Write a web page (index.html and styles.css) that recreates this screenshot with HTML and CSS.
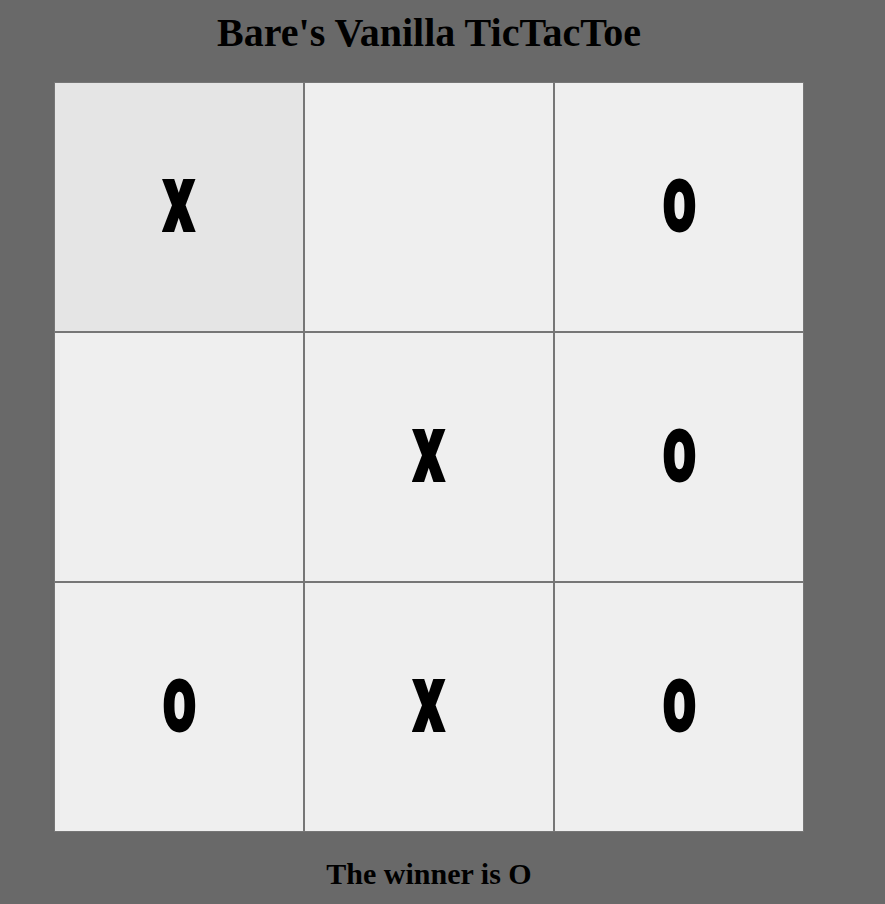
FILE: index.html
```html
<!DOCTYPE html>
<html lang="en">
<head>
<meta charset="utf-8">
<title>Bare's Vanilla TicTacToe</title>
<link rel="stylesheet" href="styles.css">
</head>
<body>
<main class="game">
  <h1 class="title">Bare's Vanilla TicTacToe</h1>
  <div class="board">
    <button class="cell cell-hover"><span class="mark">X</span></button>
    <button class="cell"><span class="mark"></span></button>
    <button class="cell"><span class="mark">O</span></button>
    <button class="cell"><span class="mark"></span></button>
    <button class="cell"><span class="mark">X</span></button>
    <button class="cell"><span class="mark">O</span></button>
    <button class="cell"><span class="mark">O</span></button>
    <button class="cell"><span class="mark">X</span></button>
    <button class="cell"><span class="mark">O</span></button>
  </div>
  <p class="status">The winner is O</p>
</main>
</body>
</html>
```
FILE: styles.css
```css
html, body {
  margin: 0;
  padding: 0;
}
body {
  background: #696969;
  color: #000;
  font-family: "Liberation Serif", "Times New Roman", serif;
}
.game {
  width: 750px;
  margin-left: 54px;
  display: flex;
  flex-direction: column;
  align-items: center;
}
.title {
  margin: 10px 0 26px;
  font-size: 40px;
  line-height: 46px;
  font-weight: bold;
  text-align: center;
}
.board {
  display: grid;
  grid-template-columns: repeat(3, 250px);
  grid-template-rows: repeat(3, 250px);
}
.cell {
  box-sizing: border-box;
  margin: 0;
  padding: 0;
  border: 1px solid #767676;
  border-radius: 0;
  background: #efefef;
  display: flex;
  align-items: center;
  justify-content: center;
  appearance: none;
  -webkit-appearance: none;
}
.cell-hover {
  background: #e5e5e5;
}
.mark {
  display: inline-block;
  font-family: Roboto, "DejaVu Sans", sans-serif;
  font-weight: 900;
  font-size: 68px;
  line-height: 1;
  color: #000;
  -webkit-text-stroke: 4px #000;
  transform: scaleX(0.68);
}
.status {
  margin: 25px 0 0;
  font-size: 30px;
  line-height: 34px;
  font-weight: bold;
  text-align: center;
}
```
